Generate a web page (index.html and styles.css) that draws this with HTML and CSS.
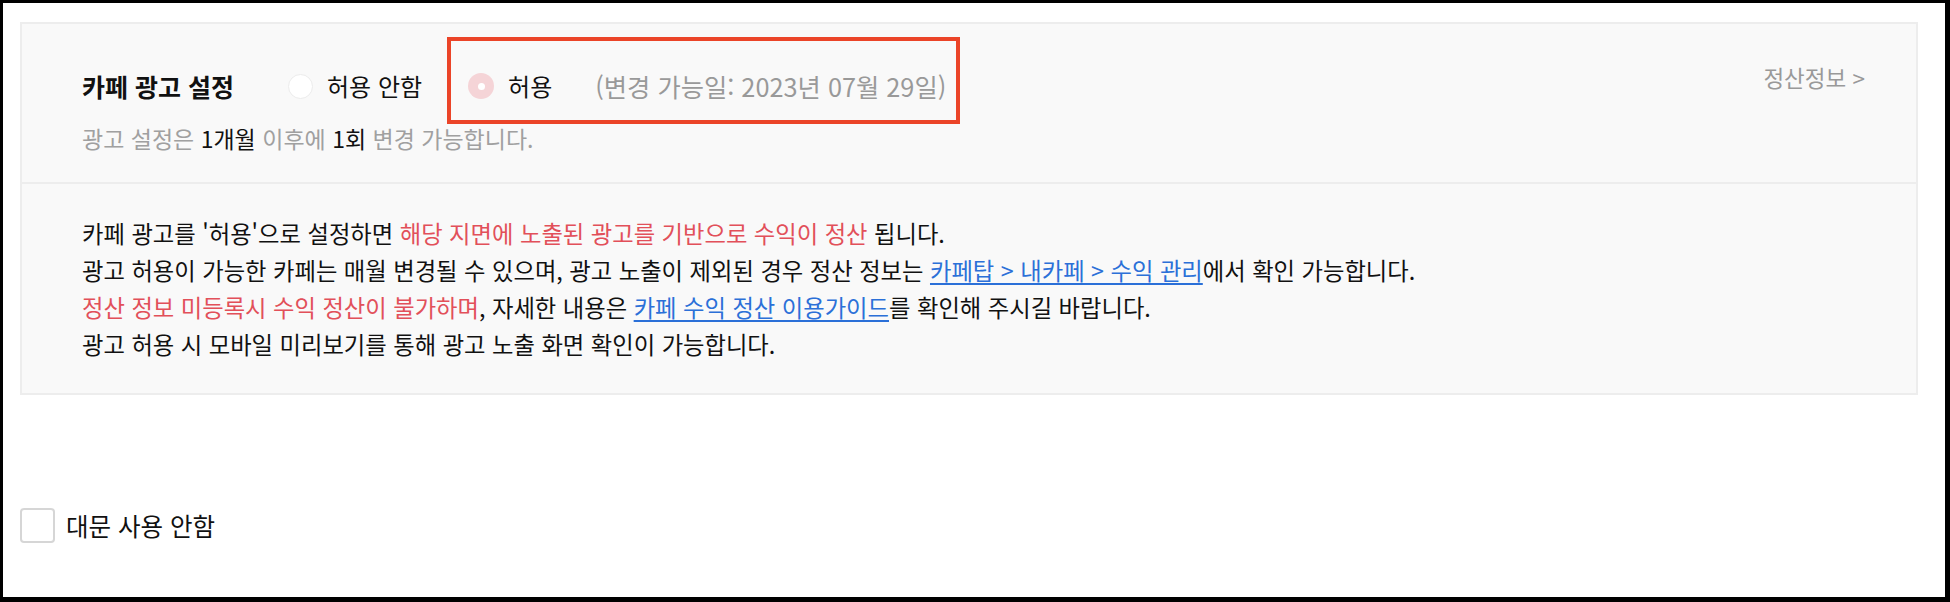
FILE: index.html
```html
<!DOCTYPE html>
<html lang="ko">
<head>
<meta charset="utf-8">
<title>카페 광고 설정</title>
<link rel="stylesheet" href="styles.css">
</head>
<body>
<div class="frame">
  <section class="panel">
    <div class="panel-top">
      <div class="setting">
        <div class="setting-row">
          <h2 class="setting-title">카페 광고 설정</h2>
          <label class="radio">
            <span class="radio-dot"></span>
            <span class="radio-label">허용 안함</span>
          </label>
          <span class="highlight">
            <label class="radio">
              <span class="radio-dot radio-dot-on"></span>
              <span class="radio-label">허용</span>
            </label>
            <span class="change-date">(변경 가능일: 2023년 07월 29일)</span>
          </span>
        </div>
        <p class="setting-note">광고 설정은 <b>1개월</b> 이후에 <b>1회</b> 변경 가능합니다.</p>
      </div>
      <a class="settle-link" href="#">정산정보 &gt;</a>
    </div>
    <div class="panel-body">
      <p>카페 광고를 '허용'으로 설정하면 <span class="warn">해당 지면에 노출된 광고를 기반으로 수익이 정산</span> 됩니다.</p>
      <p>광고 허용이 가능한 카페는 매월 변경될 수 있으며, 광고 노출이 제외된 경우 정산 정보는 <a class="link" href="#">카페탑 &gt; 내카페 &gt; 수익 관리</a>에서 확인 가능합니다.</p>
      <p><span class="warn">정산 정보 미등록시 수익 정산이 불가하며</span>, 자세한 내용은 <a class="link" href="#">카페 수익 정산 이용가이드</a>를 확인해 주시길 바랍니다.</p>
      <p>광고 허용 시 모바일 미리보기를 통해 광고 노출 화면 확인이 가능합니다.</p>
    </div>
  </section>
  <label class="check">
    <span class="check-box"></span>
    <span class="check-label">대문 사용 안함</span>
  </label>
</div>
</body>
</html>
```

FILE: styles.css
```css
html, body {
  margin: 0;
  padding: 0;
  background: #000;
}

body {
  font-family: "Noto Sans CJK KR", "Noto Sans", sans-serif;
  color: #111;
}

.frame {
  box-sizing: border-box;
  margin: 3px 5px 5px 3px;
  height: 594px;
  background: #fff;
  padding: 19px 27px 0 17px;
}

.panel {
  background: #f9f9f9;
  border: 2px solid #ededed;
}

.panel-top {
  display: flex;
  justify-content: space-between;
  align-items: flex-start;
  height: 160px;
  box-sizing: border-box;
  padding: 47px 51px 0 60px;
  border-bottom: 2px solid #ededed;
}

.setting-row {
  display: flex;
  align-items: center;
  height: 30px;
}

.setting-title {
  margin: 0 54px 0 0;
  font-size: 25px;
  font-weight: 700;
  line-height: 30px;
  color: #111;
}

.radio {
  display: inline-flex;
  align-items: center;
  gap: 14px;
  font-size: 24px;
  line-height: 30px;
  color: #111;
}

.radio + .highlight {
  margin-left: 46px;
}

.radio-dot {
  box-sizing: border-box;
  width: 25px;
  height: 25px;
  border-radius: 50%;
  background: #fff;
  border: 1px solid #ececec;
  display: inline-flex;
  align-items: center;
  justify-content: center;
}

.radio-dot-on {
  width: 26px;
  height: 26px;
  border: none;
  background: #f5d4d7;
}

.radio-dot-on::after {
  content: "";
  width: 7px;
  height: 7px;
  border-radius: 50%;
  background: #fff;
}

.highlight {
  position: relative;
  display: inline-flex;
  align-items: center;
}

.highlight::after {
  content: "";
  position: absolute;
  top: -34px;
  bottom: -23px;
  left: -21px;
  right: -14px;
  border: 4px solid #eb4428;
  pointer-events: none;
}

.change-date {
  margin-left: 43px;
  font-size: 25.3px;
  line-height: 30px;
  color: #999;
}

.setting-note {
  margin: 22px 0 0;
  font-size: 23px;
  line-height: 30px;
  color: #a0a0a0;
}

.setting-note b {
  font-weight: 400;
  color: #111;
}

.settle-link {
  margin-top: -9px;
  font-size: 22.5px;
  line-height: 30px;
  color: #999;
  text-decoration: none;
}

.panel-body {
  height: 209px;
  box-sizing: border-box;
  padding: 31px 60px 0;
}

.panel-body p {
  margin: 0;
  font-size: 23.3px;
  line-height: 37px;
  color: #111;
}

.warn {
  color: #e2505a;
}

.link {
  color: #2b70d8;
  text-decoration: underline;
  text-underline-offset: 3px;
}

.check {
  display: flex;
  align-items: center;
  gap: 11px;
  margin-top: 113px;
}

.check-box {
  box-sizing: border-box;
  width: 35px;
  height: 35px;
  border: 2px solid #d6d6d6;
  border-radius: 4px;
  background: #fff;
}

.check-label {
  font-size: 24.5px;
  line-height: 30px;
  color: #111;
}
```
